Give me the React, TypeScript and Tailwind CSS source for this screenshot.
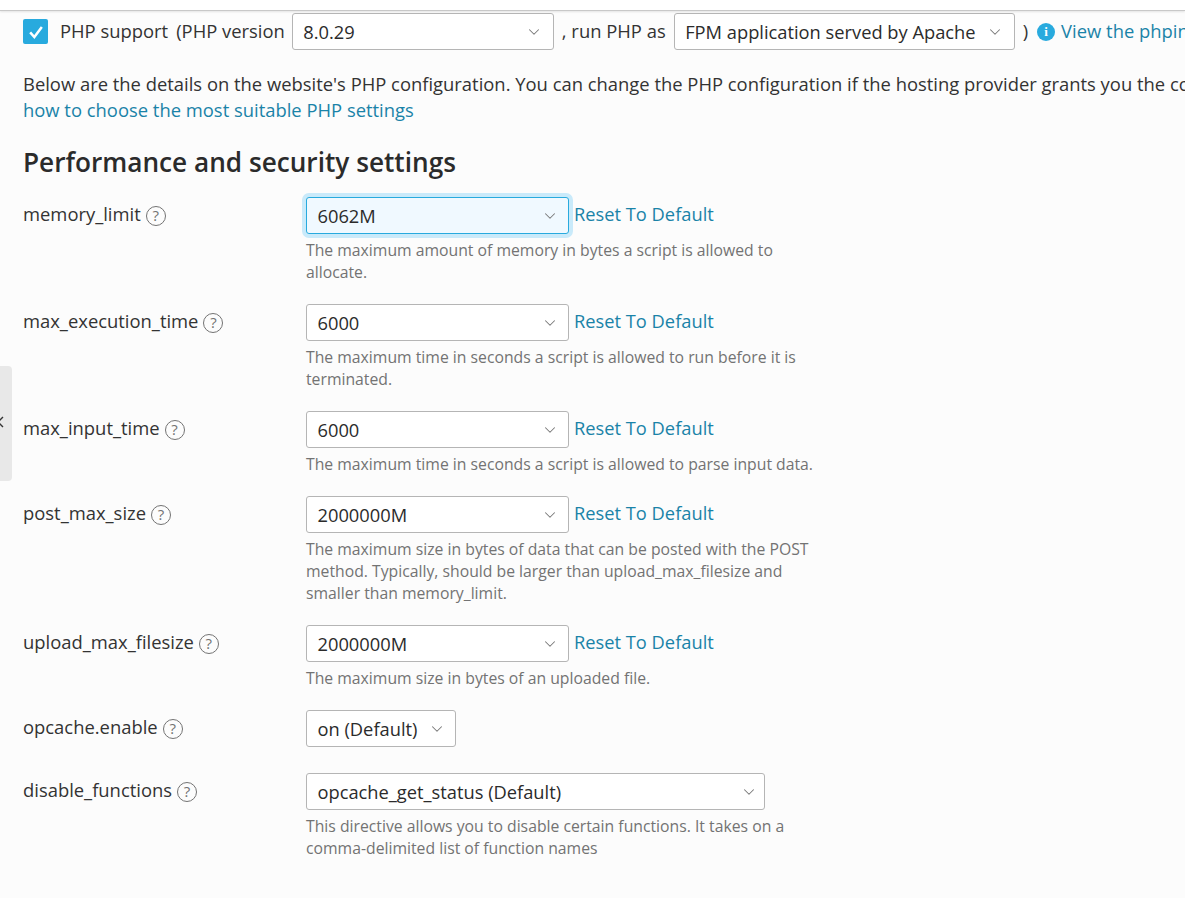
import { ChevronDown } from "lucide-react";

interface SelectBoxProps {
	value: string;
	widthClass: string;
	paddingClass?: string;
	focused?: boolean;
}

function SelectBox({ value, widthClass, paddingClass = "pr-[9px]", focused }: SelectBoxProps) {
	return (
		<div
			className={`${widthClass} ${paddingClass} h-[37px] shrink-0 flex items-center justify-between pl-[10.5px] rounded-[3px] border text-[18.3px] text-[#2b2b2b] ${
				focused
					? "bg-[#f0f9ff] border-[#28aade] shadow-[0_0_0_4px_#c9eafa]"
					: "bg-white border-[#b5b5b5]"
			}`}
		>
			<span className="whitespace-nowrap">{value}</span>
			<ChevronDown className="w-[18px] h-[18px] text-[#777] shrink-0" strokeWidth={1.4} />
		</div>
	);
}

function HelpIcon() {
	return (
		<span className="ml-[5px] mt-[2px] inline-flex items-center justify-center w-[20px] h-[20px] rounded-full border-[1.5px] border-[#737373] text-[15px] leading-none text-[#737373]">
			?
		</span>
	);
}

interface RowData {
	name: string;
	value: string;
	widthClass: string;
	paddingClass?: string;
	focused?: boolean;
	reset?: boolean;
	description?: string[];
	rowClass: string;
}

const rows: RowData[] = [
	{
		name: "memory_limit",
		value: "6062M",
		widthClass: "w-[263px]",
		focused: true,
		reset: true,
		description: ["The maximum amount of memory in bytes a script is allowed to", "allocate."],
		rowClass: "mb-[21px]",
	},
	{
		name: "max_execution_time",
		value: "6000",
		widthClass: "w-[263px]",
		reset: true,
		description: ["The maximum time in seconds a script is allowed to run before it is", "terminated."],
		rowClass: "mb-[21px]",
	},
	{
		name: "max_input_time",
		value: "6000",
		widthClass: "w-[263px]",
		reset: true,
		description: ["The maximum time in seconds a script is allowed to parse input data."],
		rowClass: "mb-[21px]",
	},
	{
		name: "post_max_size",
		value: "2000000M",
		widthClass: "w-[263px]",
		reset: true,
		description: [
			"The maximum size in bytes of data that can be posted with the POST",
			"method. Typically, should be larger than upload_max_filesize and",
			"smaller than memory_limit.",
		],
		rowClass: "mb-[21px]",
	},
	{
		name: "upload_max_filesize",
		value: "2000000M",
		widthClass: "w-[263px]",
		reset: true,
		description: ["The maximum size in bytes of an uploaded file."],
		rowClass: "mb-[21px]",
	},
	{
		name: "opcache.enable",
		value: "on (Default)",
		widthClass: "w-[150px]",
		rowClass: "mb-[26px]",
	},
	{
		name: "disable_functions",
		value: "opcache_get_status (Default)",
		widthClass: "w-[459px]",
		paddingClass: "pr-[6px]",
		description: [
			"This directive allows you to disable certain functions. It takes on a",
			"comma-delimited list of function names",
		],
		rowClass: "",
	},
];

export default function App() {
	return (
		<div className="w-[1185px] h-[898px] overflow-hidden relative bg-[#fcfcfc] font-['Open_Sans',sans-serif] text-[18.4px] text-[#333]">
			<div className="h-[11px] bg-white border-b border-[#c8c8c8] shadow-[0_1px_2px_rgba(0,0,0,0.1)]" />

			<div className="pl-[23px]">
				<div className="flex items-center h-[37px] mt-[2px] whitespace-nowrap">
					<span className="shrink-0 w-[25px] h-[25px] rounded-[2px] bg-[#28aade] flex items-center justify-center">
						<svg viewBox="0 0 24 24" className="w-[20px] h-[20px]" fill="none" stroke="white" strokeWidth="3">
							<path d="M5 12.5l5 5.5 9-12" />
						</svg>
					</span>
					<span className="shrink-0 ml-[12px] mb-[2px]">PHP support</span>
					<span className="shrink-0 ml-[8px] mb-[2px]">(PHP version</span>
					<span className="shrink-0 ml-[7px]">
						<SelectBox value="8.0.29" widthClass="w-[262px]" paddingClass="pr-[10px]" />
					</span>
					<span className="shrink-0 ml-[8px] mb-[2px]">, run PHP as</span>
					<span className="shrink-0 ml-[8px]">
						<SelectBox value="FPM application served by Apache" widthClass="w-[341px]" paddingClass="pr-[10px]" />
					</span>
					<span className="shrink-0 ml-[8px] mb-[2px]">)</span>
					<span className="shrink-0 ml-[9px] w-[18px] h-[18px] rounded-full bg-[#28aade] flex items-center justify-center text-white text-[13px] font-bold font-['Liberation_Serif',serif]">
						i
					</span>
					<span className="shrink-0 ml-[6px] mb-[2px] text-[#1a83a8]">View the phpinfo() page</span>
				</div>

				<p className="mt-[21px] leading-[26px] whitespace-nowrap">
					Below are the details on the website's PHP configuration. You can change the PHP configuration if the hosting provider grants you the corresponding permissions.
				</p>
				<a className="block leading-[26px] text-[#1a83a8]">how to choose the most suitable PHP settings</a>

				<h2 className="mt-[23px] text-[26.2px] leading-[32px] font-semibold text-[#2b2b2b]">
					Performance and security settings
				</h2>

				<div className="mt-[19px]">
					{rows.map((row) => (
						<div key={row.name} className={`flex ${row.rowClass}`}>
							<div className="w-[283px] shrink-0 h-[35px] flex items-center text-[#333]">
								<span className="mb-[2px]">{row.name}</span>
								<HelpIcon />
							</div>
							<div>
								<div className="flex items-center">
									<SelectBox
										value={row.value}
										widthClass={row.widthClass}
										paddingClass={row.paddingClass}
										focused={row.focused}
									/>
									{row.reset && (
										<a className="ml-[5px] mb-[4px] text-[18.3px] text-[#1a83a8]">Reset To Default</a>
									)}
								</div>
								{row.description && (
									<div className="mt-[5px] text-[15.75px] leading-[22px] text-[#737373] whitespace-nowrap">
										{row.description.map((line) => (
											<div key={line}>{line}</div>
										))}
									</div>
								)}
							</div>
						</div>
					))}
				</div>
			</div>

			<div className="absolute left-0 top-[366px] w-[12px] h-[115px] bg-[#e8e8e8] rounded-r-[4px] overflow-hidden">
				<svg viewBox="0 0 10 12" className="absolute left-[-5px] top-[50px] w-[10px] h-[12px]" fill="none" stroke="#333" strokeWidth="1.4">
					<path d="M8 1L3 6l5 5" />
				</svg>
			</div>
		</div>
	);
}
